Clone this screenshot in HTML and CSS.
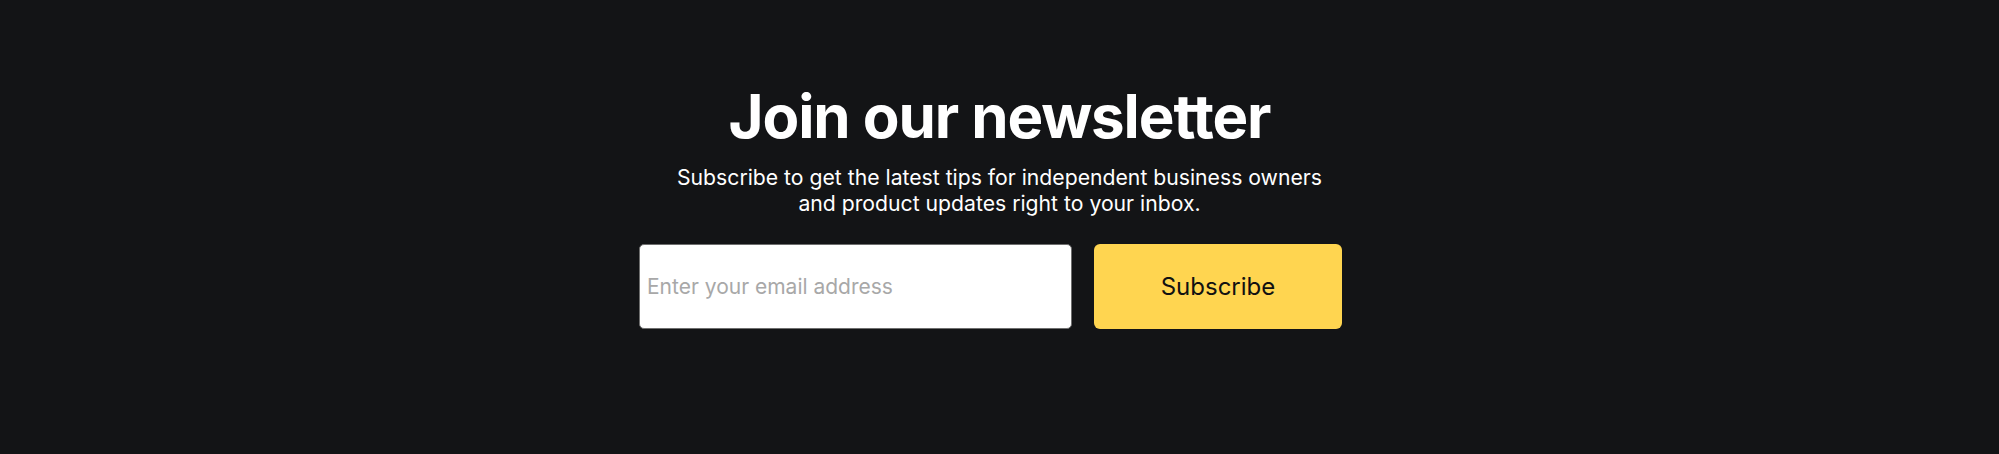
FILE: index.html
```html
<!DOCTYPE html>
<html lang="en">
<head>
    <meta charset="UTF-8">
    <title>Newsletter</title>
    <link rel="stylesheet" href="styles.css">
</head>
<body>
    <section class="newsletter">
        <h1>Join our newsletter</h1>
        <p class="lead">Subscribe to get the latest tips for independent business owners and product updates right to your inbox.</p>

        <form class="signup" id="signupForm">
            <input type="email" name="email" placeholder="Enter your email address" required>
            <button type="submit">Subscribe</button>
        </form>
    </section>
</body>
</html>
```

FILE: styles.css
```css
body { margin: 0; background: #131416; font-family: Inter, "Noto Sans", sans-serif; color: #fff; }
.newsletter { display: flex; flex-direction: column; align-items: center; padding-top: 80px; height: 374px; }
.newsletter h1 { margin: 0; font-size: 60px; line-height: 72px; font-weight: 700; letter-spacing: -1.1px; }
.lead { margin: 12px 0 0; max-width: 670px; text-align: center; font-size: 21.2px; line-height: 26px; }
.signup { display: flex; gap: 22px; margin-top: 28px; padding-right: 18px; height: 85px; }
.signup input { width: 433px; box-sizing: border-box; padding: 0 7px; border: 1px solid #6e6e6e; border-radius: 5px; background: #fff; font-family: inherit; font-size: 21px; color: #222; }
.signup input::placeholder { color: #a8a8a8; }
.signup button { width: 248px; border: none; border-radius: 6px; background: #ffd550; color: #111; font-family: inherit; font-size: 24px; cursor: pointer; }
.signup button:hover { background: #f5c93f; }
```
